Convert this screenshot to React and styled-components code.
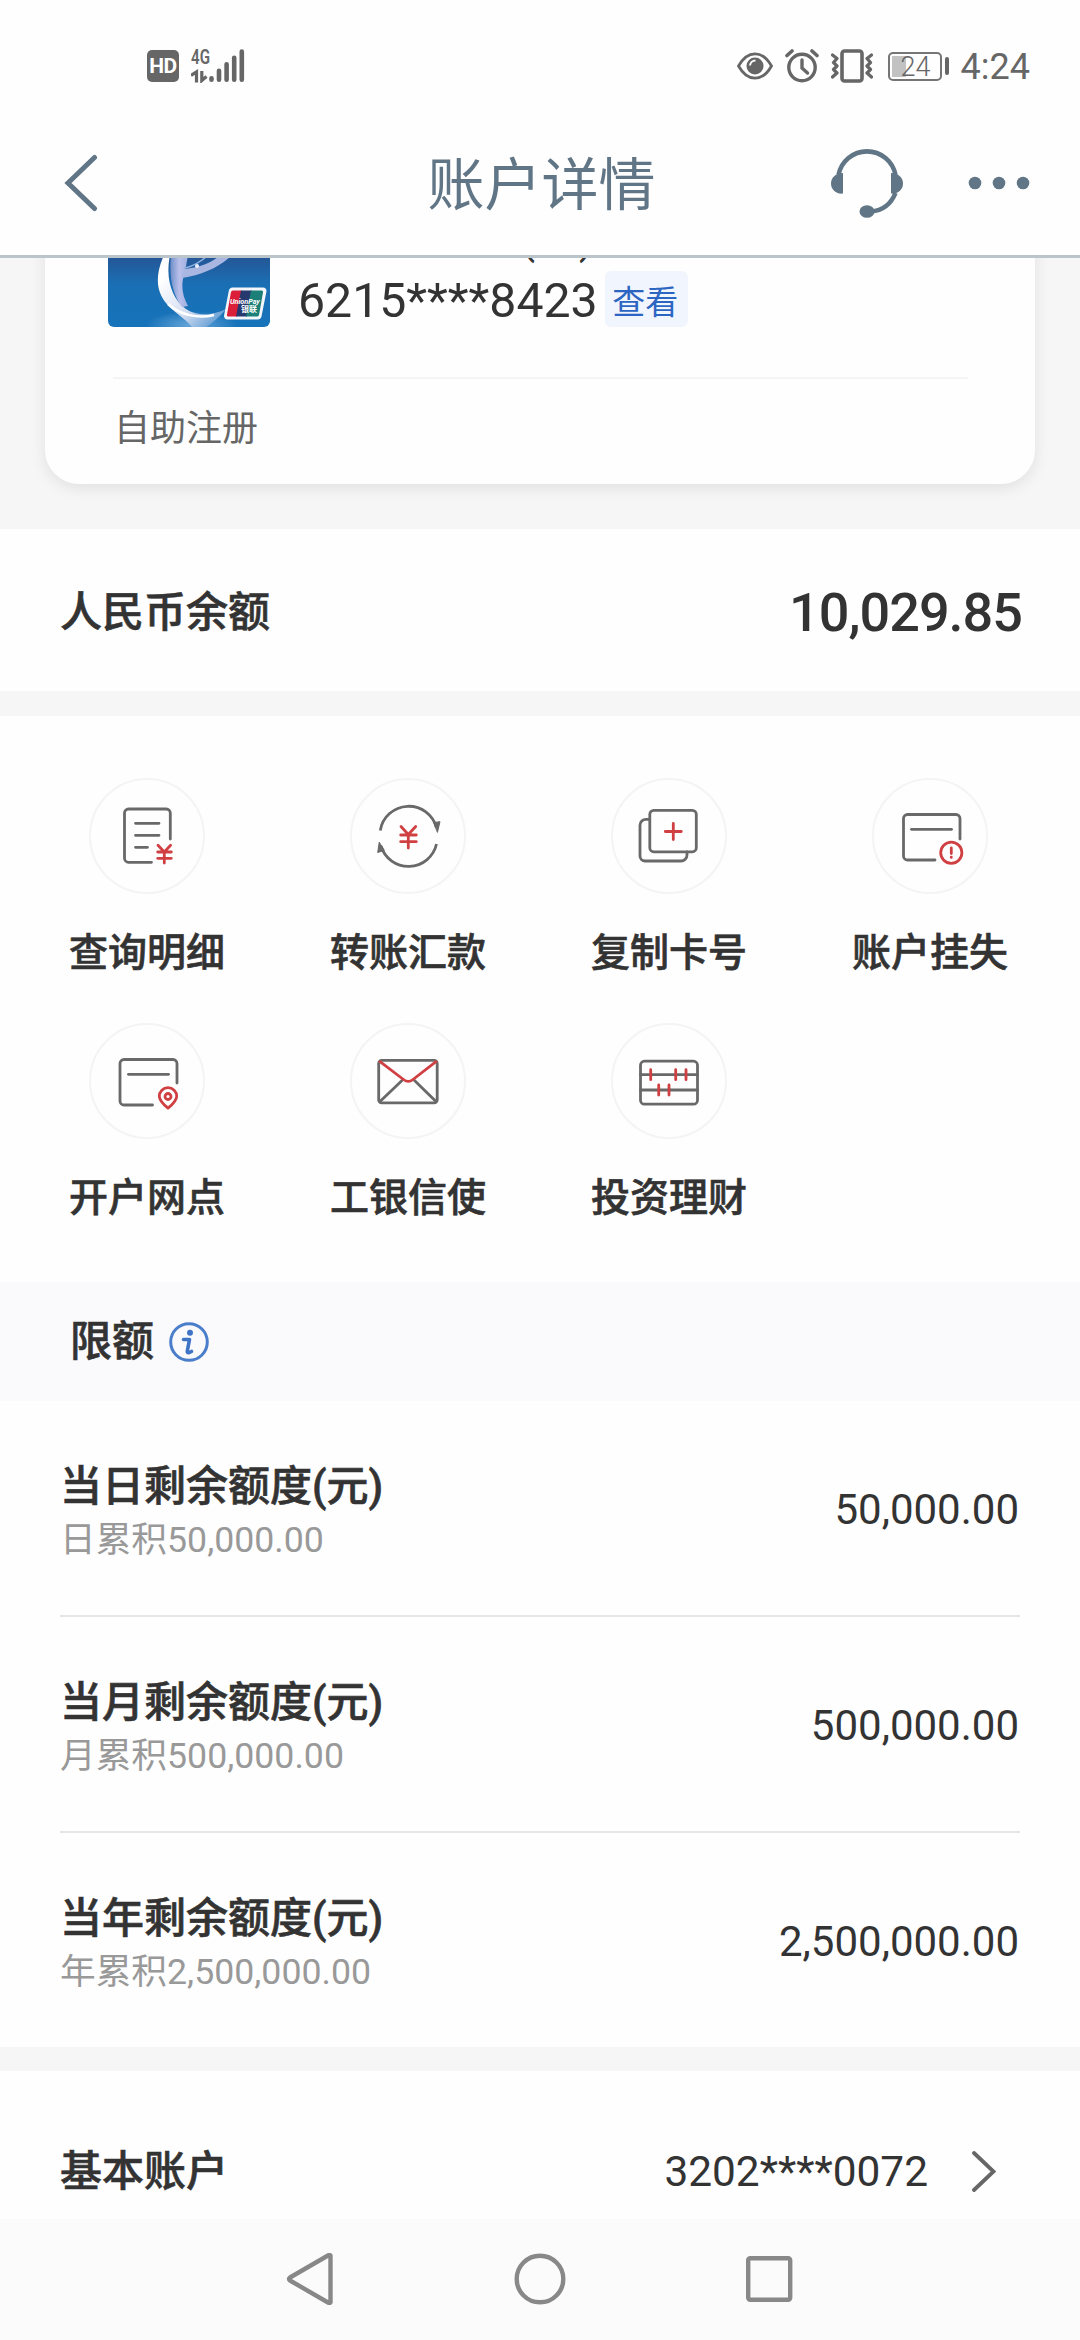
import React from 'react';
import styled, { createGlobalStyle } from 'styled-components';

const GlobalStyle = createGlobalStyle`
  * { box-sizing: border-box; }
  body {
    margin: 0;
    background: #fefefe;
    font-family: Roboto, "Noto Sans CJK SC", sans-serif;
    color: #333;
  }
`;

const INK = '#696969';
const RED = '#d04043';
const SLATE = '#607585';

const Screen = styled.div`
  width: 1080px;
  height: 2340px;
  overflow: hidden;
  display: flex;
  flex-direction: column;
  background: #fefefe;
`;

/* Status bar */

const StatusBar = styled.div`
  height: 112px;
  flex: none;
  display: flex;
  justify-content: space-between;
  padding: 45px 50px 0 147px;
  color: #666;
`;

const StatusGroup = styled.div`
  height: 42px;
  display: flex;
  align-items: center;
  gap: ${(p) => p.$gap}px;
`;

const HdBadge = styled.div`
  width: 32px;
  height: 32px;
  border-radius: 5px;
  background: #666;
  color: #fff;
  font-size: 21px;
  font-weight: 700;
  line-height: 33px;
  text-align: center;
  letter-spacing: -0.5px;
`;

const SignalCluster = styled.div`
  display: grid;
  width: 54px;
  height: 34px;

  > * {
    grid-area: 1 / 1;
  }
`;

const NetworkType = styled.span`
  justify-self: start;
  align-self: start;
  font-size: 21px;
  font-weight: 600;
  line-height: 16px;
  transform: scaleX(0.72);
  transform-origin: left;
`;

const Battery = styled.div`
  display: flex;
  align-items: center;
  gap: 3px;
  margin-left: 3px;
`;

const BatteryShell = styled.div`
  width: 54px;
  height: 29px;
  border: 2px solid #757575;
  border-radius: 5px;
  background: linear-gradient(#c2c2c2, #c2c2c2) 2px 2px / 14px 21px no-repeat;
  font-size: 27px;
  font-weight: 300;
  line-height: 26px;
  padding-left: 11px;
`;

const BatteryNub = styled.div`
  width: 4px;
  height: 18px;
  border-radius: 2px;
  background: #666;
`;

const Clock = styled.div`
  font-size: 36px;
  line-height: 42px;
  padding-top: 2px;
`;

/* Title bar */

const TitleBar = styled.header`
  height: 146px;
  flex: none;
  display: grid;
  grid-template-columns: 300px 1fr 300px;
  align-items: center;
  border-bottom: 3px solid #b9c5ca;
  padding: 0 56px 1px 64px;
`;

const Title = styled.h1`
  margin: 0;
  font-size: 57px;
  font-weight: 400;
  line-height: 70px;
  text-align: center;
  white-space: nowrap;
  color: ${SLATE};
  padding: 6px 5px 0 0;
`;

const TitleActions = styled.div`
  display: flex;
  align-items: center;
  justify-content: flex-end;
  gap: 65px;
  margin-right: -6px;
`;

/* Account card */

const CardArea = styled.section`
  height: 271px;
  flex: none;
  overflow: hidden;
  display: flex;
  flex-direction: column;
  justify-content: flex-end;
  background: #f6f6f6;
  padding: 0 45px 45px;
`;

const AccountCard = styled.div`
  flex: none;
  border-radius: 34px;
  background: #fefefe;
  box-shadow: 0 4px 16px rgba(0, 0, 0, 0.09);
  padding: 40px 63px 0;
`;

const CardTop = styled.div`
  display: flex;
  height: 154px;
  gap: 28px;
  border-bottom: 2px solid #f4f4f4;
  margin: 0 4px 0 5px;
`;

const CardArt = styled.svg`
  width: 162px;
  height: 102px;
  border-radius: 6px;
  margin-left: -5px;
  flex: none;
`;

const CardInfo = styled.div`
  display: flex;
  flex-direction: column;
  justify-content: flex-end;
  gap: 11px;
  height: 102px;
`;

const CardName = styled.div`
  font-size: 44px;
  line-height: 44px;
  padding-left: 2px;
  white-space: nowrap;
`;

const CardNumberRow = styled.div`
  display: flex;
  align-items: center;
  gap: 7px;
  height: 56px;
`;

const CardNumber = styled.span`
  font-size: 48.2px;
  line-height: 56px;
  padding-top: 4px;
`;

const ViewTag = styled.button`
  width: 83px;
  height: 56px;
  border: 0;
  border-radius: 6px;
  background: #f1f5fd;
  color: #2c66c2;
  font-family: inherit;
  font-size: 33px;
  line-height: 56px;
  padding: 4px 2px 0 0;
  text-align: center;
`;

const CardNote = styled.div`
  height: 105px;
  padding: 24px 6px 0;
  font-size: 36px;
  line-height: 52px;
  color: #666;
`;

/* Panels */

const Gap = styled.div`
  height: ${(p) => p.$h}px;
  flex: none;
  background: #f6f6f6;
`;

const BalanceRow = styled.section`
  height: 162px;
  flex: none;
  display: flex;
  align-items: center;
  justify-content: space-between;
  padding: 6px 58px 0 60px;
`;

const Label = styled.div`
  font-size: 42px;
  font-weight: 500;
  line-height: 50px;
  -webkit-text-stroke: 0.6px currentColor;
`;

const Balance = styled.div`
  font-size: 54px;
  font-weight: 500;
  line-height: 64px;
  letter-spacing: -1px;
`;

const Actions = styled.section`
  height: 566px;
  flex: none;
  display: grid;
  grid-template-columns: repeat(4, 261px);
  grid-auto-rows: 245px;
  padding: 62px 0 0 16.5px;
`;

const Action = styled.div`
  display: flex;
  flex-direction: column;
  align-items: center;
`;

const ActionCircle = styled.div`
  width: 116px;
  height: 116px;
  border: 2px solid #f4f4f4;
  border-radius: 50%;
  display: flex;
  align-items: center;
  justify-content: center;

  svg {
    flex: none;
  }
`;

const ActionLabel = styled.div`
  margin-top: 34px;
  font-size: 39px;
  font-weight: 500;
  line-height: 50px;
  -webkit-text-stroke: 0.6px currentColor;
`;

const SectionHead = styled.div`
  height: 119px;
  flex: none;
  display: flex;
  align-items: center;
  gap: 15px;
  padding-left: 70px;
  background: #fafafc;
`;

const LimitList = styled.section`
  padding: 0 60px;
  height: 646px;
  flex: none;
`;

const LimitRow = styled.div`
  height: 216px;
  display: flex;
  align-items: center;
  justify-content: space-between;
  border-bottom: 2px solid ${(p) => (p.$last ? 'transparent' : '#e6e6e6')};
  padding: 4px 1px 0 0;
`;

const LimitText = styled.div`
  display: flex;
  flex-direction: column;
  gap: 4px;
  padding-top: 5px;
`;

const LimitNote = styled.div`
  font-size: 35.700px;
  line-height: 48px;
  color: #999;
`;

const Amount = styled.div`
  font-size: 42px;
  line-height: 50px;
`;

const AccountRow = styled.section`
  height: 148px;
  flex: none;
  display: flex;
  align-items: center;
  padding: 53px 84px 0 60px;
`;

const AccountNumber = styled.div`
  margin-left: auto;
  margin-right: 44px;
  font-size: 42.400px;
  line-height: 50px;
`;

const NavBar = styled.nav`
  height: 121px;
  flex: none;
  display: flex;
  align-items: center;
  justify-content: center;
  gap: 178px;
  background: #fbfbfb;
  padding-bottom: 1px;
`;

/* Drawings */

const EyeIcon = () => (
  <svg width="36" height="28" viewBox="0 0 36 28" fill="none">
    <path d="M1.500 14C6 6 12 1.800 18 1.800S30 6 34.500 14C30 22 24 26.200 18 26.200S6 22 1.500 14Z" stroke="#666" strokeWidth="2.800" />
    <circle cx="18" cy="14" r="8.500" fill="#666" />
    <path d="M13 13.500a5.500 5.500 0 0 1 5.500-5" stroke="#fff" strokeWidth="2" />
  </svg>
);

const AlarmIcon = () => (
  <svg width="34" height="34" viewBox="0 0 34 34" fill="none" stroke="#666">
    <circle cx="17" cy="18.500" r="13.200" strokeWidth="3.400" />
    <path d="M17 11v8l5.500 5" strokeWidth="3.400" strokeLinecap="round" />
    <path d="M2 6.500l5-4.500M32 6.500L27 2" strokeWidth="3.600" strokeLinecap="round" />
  </svg>
);

const VibrateIcon = () => (
  <svg width="42" height="34" viewBox="0 0 42 34" fill="none" stroke="#666">
    <rect x="11" y="2" width="20" height="30" rx="2.500" strokeWidth="3.600" />
    <path d="M1.500 6L6 9.500 2.500 13.500 6 17 2.500 20.500 6 24 1.500 28" strokeWidth="3.200" strokeLinejoin="round" strokeLinecap="round" />
    <path d="M40.500 6L36 9.500 39.500 13.500 36 17 39.500 20.500 36 24 40.500 28" strokeWidth="3.200" strokeLinejoin="round" strokeLinecap="round" />
  </svg>
);

const SignalIcon = () => (
  <svg width="54" height="34" viewBox="0 0 54 34" fill="none" stroke="#666">
    <path d="M0 26.500L5.500 23v10.500" strokeWidth="3.200" />
    <path d="M10.800 22v9.500L15.500 27.500" strokeWidth="3.200" />
    <g strokeWidth="4.600" strokeLinecap="round">
      <path d="M20.500 29.200v1.500M28 21.700v9M35.600 15.300v15.400M43.200 8.700v22M50.800 2.500v28.200" />
    </g>
  </svg>
);

const BackIcon = () => (
  <svg width="34" height="58" viewBox="0 0 34 58" fill="none" stroke={SLATE} strokeWidth="5" strokeLinecap="round">
    <path d="M30.500 3.500L4 29 30.500 54.500" strokeLinejoin="miter" />
  </svg>
);

const HeadsetIcon = () => (
  <svg width="72" height="72" viewBox="0 0 72 72" fill="none">
    <path d="M7.500 28A29 29 0 0 1 64.500 28M64.500 46C60 57 53 63.500 40 64.500" stroke={SLATE} strokeWidth="4.600" />
    <path d="M12 26v20.500C5 47.500 0 42.500 0 36.500S5 26 12 26Z" fill={SLATE} />
    <path d="M60 26v20.500C67 47.500 72 42.500 72 36.500S67 26 60 26Z" fill={SLATE} />
    <ellipse cx="36" cy="64.500" rx="7.500" ry="6.300" fill={SLATE} />
  </svg>
);

const MoreIcon = () => (
  <svg width="62" height="14" viewBox="0 0 62 14" fill={SLATE}>
    <circle cx="7" cy="7" r="6.300" />
    <circle cx="31" cy="7" r="6.300" />
    <circle cx="55" cy="7" r="6.300" />
  </svg>
);

const IcbcCardArt = () => (
  <CardArt viewBox="0 0 162 102">
    <defs>
      <linearGradient id="cardBlue" x1="0" y1="0" x2="0" y2="1">
        <stop offset="0.250" stopColor="#27508f" />
        <stop offset="0.580" stopColor="#1a6fb4" />
        <stop offset="1" stopColor="#1673ba" />
      </linearGradient>
      <linearGradient id="swoosh" x1="0" y1="0" x2="1" y2="1">
        <stop offset="0.200" stopColor="#fff" />
        <stop offset="0.600" stopColor="#d5def2" />
        <stop offset="1" stopColor="#3f8acb" />
      </linearGradient>
      <linearGradient id="stem" x1="0" y1="0" x2="1" y2="0">
        <stop offset="0" stopColor="#6f8fca" />
        <stop offset="0.500" stopColor="#b9c0ea" />
        <stop offset="1" stopColor="#9fb0e0" />
      </linearGradient>
      <radialGradient id="glow">
        <stop offset="0" stopColor="#7db4e2" stopOpacity="0.800" />
        <stop offset="1" stopColor="#7db4e2" stopOpacity="0" />
      </radialGradient>
    </defs>
    <rect width="162" height="102" fill="url(#cardBlue)" />
    <ellipse cx="84" cy="100" rx="46" ry="14" fill="url(#glow)" />
    <path d="M56 30C47 50 48 66 58 78C66 88 76 92 84 102H98C104 98 112 92 118 84C106 90 90 92 78 84C64 74 57 54 62 30Z" fill="url(#swoosh)" />
    <path d="M63 30C61 52 64 68 74 82L80 81C74 70 73 60 76 50C78 42 79 36 80 30Z" fill="url(#stem)" />
    <path d="M74 53C94 50 112 42 124 30L112 30C104 38 90 43 76 44Z" fill="#a9b6e2" />
    <path d="M76 43C84 42 94 36 100 30" fill="none" stroke="#8fb0de" strokeWidth="1.500" />
    <circle cx="89" cy="41" r="2" fill="#eaf1fc" />
    <path d="M60 79C72 90 90 94 106 90" fill="none" stroke="#fff" strokeWidth="2.500" />
    <g transform="translate(116 62.500)">
      <path d="M8.500 0H39a3.500 3.500 0 0 1 3.400 4.300L37.500 29A4 4 0 0 1 33.500 32H3.500A3.500 3.500 0 0 1 .100 27.700L4.800 3.200A4 4 0 0 1 8.500 0Z" fill="#f3f6fa" />
      <path d="M9 3H18L13 29H4.500a1.500 1.500 0 0 1-1.500-2L7 4.500A2 2 0 0 1 9 3Z" fill="#dc1f38" />
      <path d="M17 3H28L23 29H12Z" fill="#26396f" />
      <path d="M27 3H37.500a1.500 1.500 0 0 1 1.500 2L35 27.500A2 2 0 0 1 33 29H22Z" fill="#1c8078" />
      <text x="6" y="16.500" fontSize="7.200" fontWeight="700" fontStyle="italic" fill="#fff" fontFamily="Roboto, sans-serif">UnionPay</text>
      <text x="17" y="24.500" fontSize="8" fontWeight="700" fill="#fff" fontFamily="'Noto Sans CJK SC', sans-serif">银联</text>
    </g>
  </CardArt>
);

const ActionSvg = ({ children }) => (
  <svg width="116" height="116" viewBox="0 0 116 116" fill="none" stroke={INK} strokeWidth="2.800" strokeLinecap="round" strokeLinejoin="round">
    {children}
  </svg>
);

const DetailIcon = () => (
  <ActionSvg>
    <path d="M81.300 61V35a4 4 0 0 0-4-4H39.500a4 4 0 0 0-4 4v45.300a4 4 0 0 0 4 4H62.500" />
    <path d="M46.500 45.300H70M46.500 57.300H70M46.500 69.300H58.500" />
    <path d="M69 67.300L75.300 74 81.600 67.300M75.300 74V85M68.700 74H82.300M68.700 80.300H82.300" stroke={RED} />
  </ActionSvg>
);

const TransferIcon = () => (
  <ActionSvg>
    <path d="M30.300 52.500A28.700 28.700 0 0 1 86.500 50M86.500 66A28.700 28.700 0 0 1 31 68" strokeLinecap="butt" />
    <path d="M84 44.500L90 43.700 87.500 54ZM29.200 64.500L27.700 74.500 34 72.500Z" fill={INK} strokeWidth="1" />
    <path d="M51 48.500L58.300 56.500 65.700 48.500M58.300 56.500V70M50.700 57H66.300M50.700 63.700H66.300" stroke={RED} />
  </ActionSvg>
);

const CopyIcon = () => (
  <ActionSvg>
    <path d="M38 41.300H35a6 6 0 0 0-6 6V78a5 5 0 0 0 5 5H70a6 6 0 0 0 6-6V74" />
    <rect x="38.800" y="32.300" width="46.500" height="41.500" rx="4" />
    <path d="M62.300 45.500V61.500M54.300 53.500H70.300" stroke={RED} />
  </ActionSvg>
);

const LossIcon = () => (
  <ActionSvg>
    <path d="M88 61V40.500a4 4 0 0 0-4-4H35.500a4 4 0 0 0-4 4V78a4 4 0 0 0 4 4H63" />
    <path d="M39.500 51.300H79.500" />
    <circle cx="79.300" cy="74.700" r="10.600" stroke={RED} />
    <path d="M79.300 70v5.500M79.300 79.200v.200" stroke={RED} />
  </ActionSvg>
);

const BranchIcon = () => (
  <ActionSvg>
    <path d="M88 60V40.500a4 4 0 0 0-4-4H35a4 4 0 0 0-4 4V78a4 4 0 0 0 4 4H63.500" />
    <path d="M39.500 51.300H79.500" />
    <path d="M79 85.200C74.500 81.500 70.300 77.800 70.300 73.300a8.700 8.700 0 0 1 17.400 0C87.700 77.800 83.500 81.500 79 85.200Z" stroke={RED} />
    <circle cx="79" cy="73.500" r="3" stroke={RED} />
  </ActionSvg>
);

const MessengerIcon = () => (
  <ActionSvg>
    <rect x="28.700" y="37.300" width="58.500" height="42.500" rx="3" />
    <path d="M30 78.500L52 57.500M86 78.500L64.500 57.500" />
    <path d="M30 38.700L53.500 56.500Q58.300 60.300 63 56.500L86 38.700" stroke={RED} />
  </ActionSvg>
);

const InvestIcon = () => (
  <ActionSvg>
    <rect x="29.500" y="38.200" width="57" height="43" rx="4" />
    <path d="M29.500 51.700H86.500M29.500 67H86.500" />
    <path d="M39.700 46.700v10M64.700 46.700v10M75 46.700v10M47.700 62v10M58 62v10" stroke={RED} />
  </ActionSvg>
);

const InfoIcon = () => (
  <svg width="40" height="40" viewBox="0 0 40 40" fill="none">
    <circle cx="20" cy="20" r="18.300" stroke="#4a7dca" strokeWidth="3" />
    <circle cx="21" cy="10.800" r="3" fill="#3f73c6" />
    <path d="M14.500 17.500H20.500L18.300 29Q18 31.200 20 30.700L22.500 29.500" stroke="#3f73c6" strokeWidth="3.600" strokeLinejoin="round" strokeLinecap="round" />
  </svg>
);

const ChevronIcon = () => (
  <svg width="24" height="41" viewBox="0 0 24 41" fill="none" stroke="#666" strokeWidth="3.800" strokeLinecap="round" strokeLinejoin="miter">
    <path d="M2 2L21.500 20.500 2 39" />
  </svg>
);

const NavBackIcon = () => (
  <svg width="50" height="52" viewBox="0 0 50 52" fill="none" stroke="#888" strokeWidth="4.400" strokeLinejoin="round">
    <path d="M44.500 2.500V49.500Q43.500 50.500 42 49.500L4 27.500Q2 26 4 24.500L42 2.500Q43.500 1.500 44.500 2.500Z" />
  </svg>
);

const NavHomeIcon = () => (
  <svg width="52" height="52" viewBox="0 0 52 52" fill="none" stroke="#888" strokeWidth="4.400">
    <circle cx="26" cy="26" r="23.300" />
  </svg>
);

const NavRecentIcon = () => (
  <svg width="50" height="52" viewBox="0 0 50 52" fill="none" stroke="#888" strokeWidth="4.400">
    <rect x="4.200" y="5.200" width="42" height="41.600" rx="2" />
  </svg>
);

const ACTIONS = [
  ['查询明细', DetailIcon],
  ['转账汇款', TransferIcon],
  ['复制卡号', CopyIcon],
  ['账户挂失', LossIcon],
  ['开户网点', BranchIcon],
  ['工银信使', MessengerIcon],
  ['投资理财', InvestIcon],
];

const LIMITS = [
  ['当日剩余额度(元)', '日累积50,000.00', '50,000.00'],
  ['当月剩余额度(元)', '月累积500,000.00', '500,000.00'],
  ['当年剩余额度(元)', '年累积2,500,000.00', '2,500,000.00'],
];

export default function App() {
  return (
    <Screen>
      <GlobalStyle />
      <StatusBar>
        <StatusGroup $gap={12}>
          <HdBadge>HD</HdBadge>
          <SignalCluster>
            <NetworkType>4G</NetworkType>
            <SignalIcon />
          </SignalCluster>
        </StatusGroup>
        <StatusGroup $gap={12}>
          <EyeIcon />
          <AlarmIcon />
          <VibrateIcon />
          <Battery>
            <BatteryShell>24</BatteryShell>
            <BatteryNub />
          </Battery>
          <Clock>4:24</Clock>
        </StatusGroup>
      </StatusBar>

      <TitleBar>
        <BackIcon />
        <Title>账户详情</Title>
        <TitleActions>
          <HeadsetIcon />
          <MoreIcon />
        </TitleActions>
      </TitleBar>

      <CardArea>
        <AccountCard>
          <CardTop>
            <IcbcCardArt />
            <CardInfo>
              <CardName>牡丹灵通卡(银)</CardName>
              <CardNumberRow>
                <CardNumber>6215****8423</CardNumber>
                <ViewTag>查看</ViewTag>
              </CardNumberRow>
            </CardInfo>
          </CardTop>
          <CardNote>自助注册</CardNote>
        </AccountCard>
      </CardArea>

      <BalanceRow>
        <Label>人民币余额</Label>
        <Balance>10,029.85</Balance>
      </BalanceRow>
      <Gap $h={25} />

      <Actions>
        {ACTIONS.map(([name, Icon]) => (
          <Action key={name}>
            <ActionCircle><Icon /></ActionCircle>
            <ActionLabel>{name}</ActionLabel>
          </Action>
        ))}
      </Actions>

      <SectionHead>
        <Label>限额</Label>
        <InfoIcon />
      </SectionHead>

      <LimitList>
        {LIMITS.map(([name, note, amount], i) => (
          <LimitRow key={name} $last={i === LIMITS.length - 1}>
            <LimitText>
              <Label>{name}</Label>
              <LimitNote>{note}</LimitNote>
            </LimitText>
            <Amount>{amount}</Amount>
          </LimitRow>
        ))}
      </LimitList>
      <Gap $h={24} />

      <AccountRow>
        <Label>基本账户</Label>
        <AccountNumber>3202****0072</AccountNumber>
        <ChevronIcon />
      </AccountRow>

      <NavBar>
        <NavBackIcon />
        <NavHomeIcon />
        <NavRecentIcon />
      </NavBar>
    </Screen>
  );
}
